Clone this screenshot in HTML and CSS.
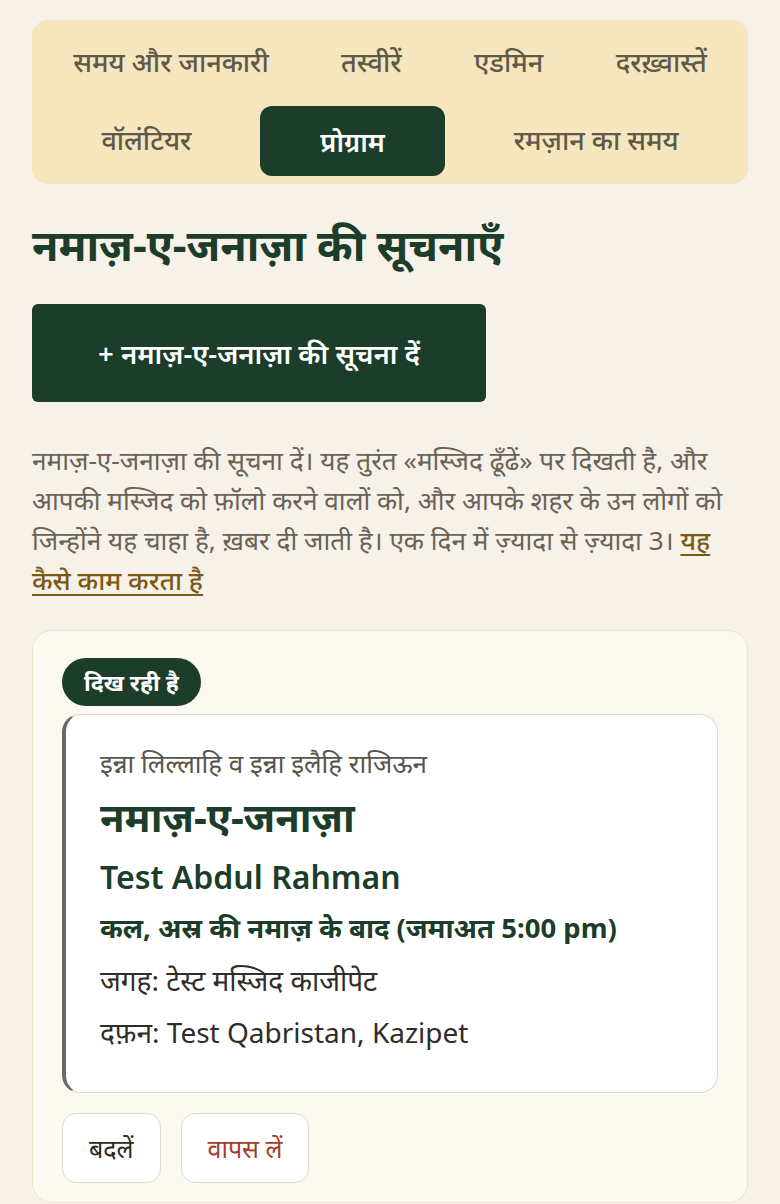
FILE: index.html
```html
<!DOCTYPE html>
<html lang="hi">
<head>
<meta charset="utf-8">
<title>नमाज़-ए-जनाज़ा की सूचनाएँ</title>
<link rel="stylesheet" href="styles.css">
</head>
<body>
<main class="page">
  <nav class="tabs">
    <a class="tab">समय और जानकारी</a>
    <a class="tab">तस्वीरें</a>
    <a class="tab">एडमिन</a>
    <a class="tab">दरख़्वास्तें</a>
    <a class="tab">वॉलंटियर</a>
    <a class="tab active">प्रोग्राम</a>
    <a class="tab">रमज़ान का समय</a>
  </nav>

  <h1 class="title">नमाज़-ए-जनाज़ा की सूचनाएँ</h1>

  <button class="primary">+ नमाज़-ए-जनाज़ा की सूचना दें</button>

  <p class="intro">नमाज़-ए-जनाज़ा की सूचना दें। यह तुरंत «मस्जिद ढूँढें» पर दिखती है, और आपकी मस्जिद को फ़ॉलो करने वालों को, और आपके शहर के उन लोगों को जिन्होंने यह चाहा है, ख़बर दी जाती है। एक दिन में ज़्यादा से ज़्यादा 3। <a class="link">यह कैसे काम करता है</a></p>

  <section class="panel">
    <span class="badge">दिख रही है</span>
    <article class="notice">
      <p class="dua">इन्ना लिल्लाहि व इन्ना इलैहि राजिऊन</p>
      <h2 class="notice-title">नमाज़-ए-जनाज़ा</h2>
      <p class="name">Test Abdul Rahman</p>
      <p class="when">कल, अस्र की नमाज़ के बाद (जमाअत 5:00 pm)</p>
      <p class="place">जगह: टेस्ट मस्जिद काजीपेट</p>
      <p class="burial">दफ़न: Test Qabristan, Kazipet</p>
    </article>
    <div class="actions">
      <button class="ghost">बदलें</button>
      <button class="ghost danger">वापस लें</button>
    </div>
  </section>
</main>
</body>
</html>
```

FILE: styles.css
```css
* { box-sizing: border-box; }

html, body {
  margin: 0;
  padding: 0;
  background: #f6f1e9;
}

body {
  font-family: "Noto Sans", "Noto Sans Devanagari", sans-serif;
  color: #2d2a24;
}

.page {
  padding: 20px 32px 0;
}

.tabs {
  display: flex;
  flex-wrap: wrap;
  gap: 8px;
  padding: 8px 9px;
  background: #f5e6bd;
  border-radius: 16px;
}

.tab {
  flex: 1 1 auto;
  height: 70px;
  padding: 0 20px 4px;
  display: flex;
  align-items: center;
  justify-content: center;
  font-size: 27px;
  font-weight: 500;
  color: #5f594a;
  border-radius: 12px;
  white-space: nowrap;
}

.tab.active {
  padding-bottom: 0;
  background: #1b3d2a;
  color: #ffffff;
  font-weight: 600;
}

.title {
  margin: 33px 0 0;
  font-size: 43px;
  font-weight: 700;
  line-height: 56px;
  color: #1b3d2a;
}

.primary {
  display: block;
  margin-top: 31px;
  height: 98px;
  padding: 0 66px;
  border: none;
  border-radius: 6px;
  background: #1b3d2a;
  color: #ffffff;
  font-family: inherit;
  font-size: 27.5px;
  font-weight: 600;
}

.intro {
  margin: 38px 0 0;
  font-size: 26.2px;
  line-height: 40px;
  color: #6a6355;
}

.link {
  color: #7a5a12;
  font-weight: 500;
  text-decoration: underline;
  text-underline-offset: 4px;
}

.panel {
  margin-top: 30px;
  padding: 27px 29px 19px;
  background: #fcf9f1;
  border: 1px solid #efe4c6;
  border-radius: 20px;
}

.badge {
  display: inline-flex;
  align-items: center;
  height: 48px;
  padding: 0 22px;
  border-radius: 24px;
  background: #1b3d2a;
  color: #ffffff;
  font-size: 23px;
  font-weight: 700;
}

.notice {
  margin-top: 8px;
  padding: 30px 34px 40px;
  background: #ffffff;
  border: 1px solid #dcdad4;
  border-left: 4px solid #6b6a60;
  border-radius: 18px;
}

.notice p, .notice h2 { margin: 0; }

.dua {
  font-size: 26px;
  line-height: 36px;
  color: #57544d;
}

.notice .notice-title {
  margin-top: 10px;
  font-size: 40px;
  font-weight: 700;
  line-height: 52px;
  color: #1b3d2a;
}

.notice .name {
  margin-top: 12px;
  font-size: 32px;
  font-weight: 600;
  line-height: 44px;
  color: #1b3d2a;
}

.notice .when {
  margin-top: 9px;
  font-size: 27.5px;
  font-weight: 700;
  line-height: 40px;
  color: #1b3d2a;
}

.notice .place {
  margin-top: 12px;
  font-size: 28px;
  line-height: 40px;
  color: #2f2d28;
}

.notice .burial {
  margin-top: 12px;
  font-size: 28px;
  line-height: 40px;
  color: #2f2d28;
}

.actions {
  display: flex;
  gap: 20px;
  margin-top: 20px;
}

.ghost {
  height: 70px;
  padding: 0 26px;
  border: 1px solid #dcdad4;
  border-radius: 14px;
  background: #ffffff;
  font-family: inherit;
  font-size: 25px;
  color: #2d2a24;
}

.ghost.danger {
  color: #a33d2b;
}
```
